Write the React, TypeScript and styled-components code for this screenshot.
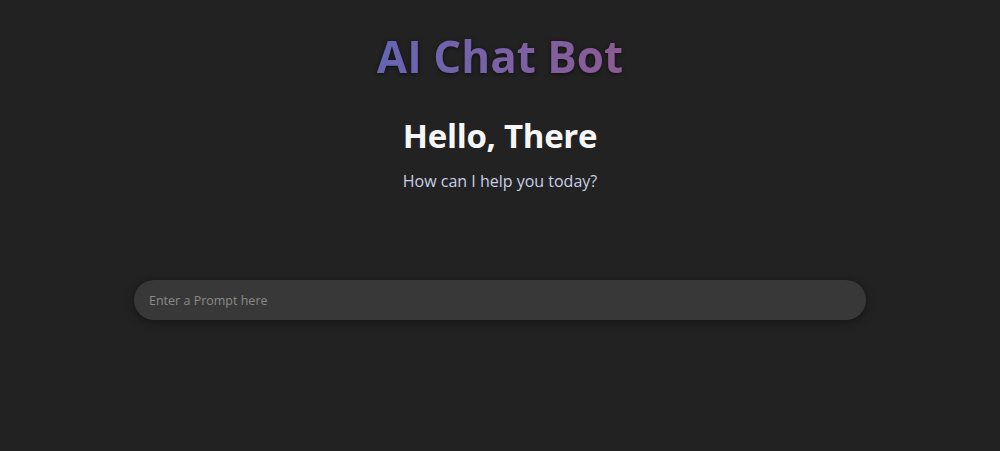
import React, { useState } from "react";
import styled, { createGlobalStyle } from "styled-components";

const GlobalStyle = createGlobalStyle`
    * {
        box-sizing: border-box;
    }
    body {
        margin: 0;
        background-color: #222222;
        font-family: "Open Sans", "Noto Sans", sans-serif;
    }
`;

const Page = styled.main`
    min-height: 451px;
    display: flex;
    flex-direction: column;
    align-items: center;
    padding-top: 28px;
    background-color: #222222;
`;

const Title = styled.h1`
    margin: 0;
    font-size: 44px;
    font-weight: 700;
    letter-spacing: 0;
    line-height: 56px;
    background: linear-gradient(90deg, #6565b3 0%, #7a62a6 50%, #8d5a93 100%);
    -webkit-background-clip: text;
    background-clip: text;
    color: transparent;
    filter: drop-shadow(0 1px 2px rgba(0, 0, 0, 0.6));
`;

const Greeting = styled.section`
    display: flex;
    flex-direction: column;
    align-items: center;
    margin-top: 30px;
`;

const Hello = styled.h2`
    margin: 0;
    font-size: 33px;
    font-weight: 700;
    line-height: 44px;
    color: #f6f6f6;
    letter-spacing: -0.3px;
`;

const Sub = styled.p`
    margin: 13px 0 0;
    font-size: 16px;
    line-height: 20px;
    color: #c9cfe6;
`;

const PromptBar = styled.form`
    width: 732px;
    margin-top: 89px;
`;

const PromptInput = styled.input`
    width: 100%;
    height: 40px;
    border: none;
    outline: none;
    border-radius: 20px;
    padding: 0 15px;
    background-color: #383838;
    color: #dddddd;
    font-family: "Open Sans", "Noto Sans", sans-serif;
    font-size: 12.5px;
    box-shadow: 0 2px 8px rgba(0, 0, 0, 0.45);

    &::placeholder {
        color: #8a8a8a;
    }
`;

function App() {
    const [prompt, setPrompt] = useState("");

    return (
        <>
            <GlobalStyle />
            <Page>
                <Title>AI Chat Bot</Title>
                <Greeting>
                    <Hello>Hello, There</Hello>
                    <Sub>How can I help you today?</Sub>
                </Greeting>
                <PromptBar onSubmit={(e) => e.preventDefault()}>
                    <PromptInput value={prompt} onChange={(e) => setPrompt(e.target.value)} placeholder="Enter a Prompt here" />
                </PromptBar>
            </Page>
        </>
    );
}

export default App;
